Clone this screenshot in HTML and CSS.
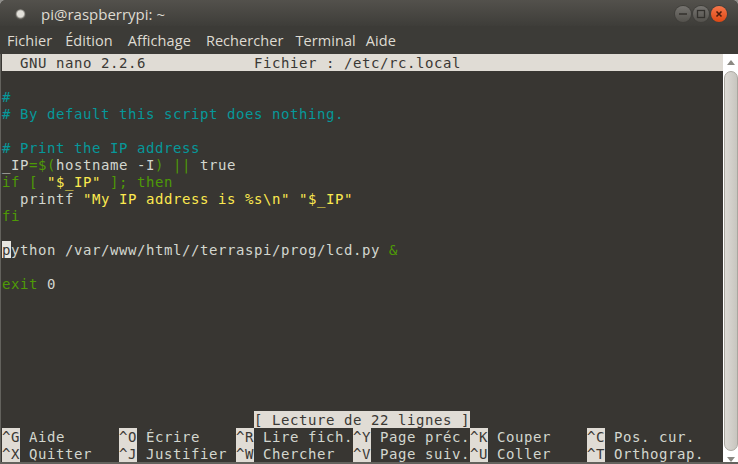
FILE: index.html
```html
<!DOCTYPE html>
<html lang="fr">
<head>
<meta charset="utf-8">
<title>pi@raspberrypi: ~</title>
<link rel="stylesheet" href="styles.css">
</head>
<body>
<div class="window">
  <header class="titlebar">
    <span class="app-dot"></span>
    <span class="title">pi@raspberrypi: ~</span>
    <div class="controls">
      <span class="btn"><svg viewBox="0 0 16 16"><path d="M4 8h8" class="glyph"/></svg></span>
      <span class="btn"><svg viewBox="0 0 16 16"><rect x="4.5" y="4.5" width="7" height="7" class="glyph"/></svg></span>
      <span class="btn close"><svg viewBox="0 0 16 16"><path d="M5.5 5.5l5 5M10.5 5.5l-5 5" class="glyph-x"/></svg></span>
    </div>
  </header>
  <nav class="menubar">
    <span>Fichier</span><span>Édition</span><span>Affichage</span><span>Rechercher</span><span>Terminal</span><span>Aide</span>
  </nav>
  <div class="main">
    <div class="terminal">
<div class="row rev">  GNU nano 2.2.6            Fichier : /etc/rc.local                             </div>
<div class="row"></div>
<div class="row c">#</div>
<div class="row c"># By default this script does nothing.</div>
<div class="row"></div>
<div class="row c"># Print the IP address</div>
<div class="row">_IP<span class="g">=$(</span>hostname -I<span class="g">) || </span>true</div>
<div class="row g">if [ <span class="y">"$_IP"</span> ]; then</div>
<div class="row">  printf <span class="y">"My IP address is %s\n" "$_IP"</span></div>
<div class="row g">fi</div>
<div class="row"></div>
<div class="row"><span class="cursor">p</span>ython /var/www/html//terraspi/prog/lcd.py <span class="g">&amp;</span></div>
<div class="row"></div>
<div class="row"><span class="g">exit</span> 0</div>
<div class="row"></div>
<div class="row"></div>
<div class="row"></div>
<div class="row"></div>
<div class="row"></div>
<div class="row"></div>
<div class="row"></div>
<div class="row">                            <span class="inv">[ Lecture de 22 lignes ]</span></div>
<div class="row"><span class="inv">^G</span> Aide      <span class="inv">^O</span> Écrire    <span class="inv">^R</span> Lire fich.<span class="inv">^Y</span> Page préc.<span class="inv">^K</span> Couper    <span class="inv">^C</span> Pos. cur.</div>
<div class="row"><span class="inv">^X</span> Quitter   <span class="inv">^J</span> Justifier <span class="inv">^W</span> Chercher  <span class="inv">^V</span> Page suiv.<span class="inv">^U</span> Coller    <span class="inv">^T</span> Orthograp.</div>
    </div>
    <aside class="scrollbar">
      <span class="arrow up"></span>
      <span class="thumb"></span>
      <span class="arrow down"></span>
    </aside>
  </div>
</div>
</body>
</html>
```
FILE: styles.css
```css
html, body { margin: 0; padding: 0; }
body { width: 738px; height: 464px; overflow: hidden; background: #8f8e8a; }
.window { width: 738px; height: 464px; display: flex; flex-direction: column; background: #3c3b37; font-family: "Open Sans", "Noto Sans", sans-serif; border-radius: 6px 6px 0 0; overflow: hidden; }
.titlebar { height: 26px; display: flex; align-items: center; padding: 2px 11px 0 15px; box-sizing: border-box; background: linear-gradient(#53514c, #3e3d39); flex: none; }
.app-dot { width: 11px; height: 11px; border-radius: 50%; background: radial-gradient(circle at 50% 45%, #e2e0da 0 38%, #55534e 62%, #33322e 100%); }
.title { margin-left: 15px; color: #dfdbd2; font-size: 15px; }
.controls { margin-left: auto; display: flex; gap: 2px; }
.btn { width: 16px; height: 16px; border-radius: 50%; background: linear-gradient(#767470, #53514c); box-shadow: 0 0 0 1px #403f3b; display: block; }
.btn svg { display: block; width: 16px; height: 16px; }
.glyph { fill: none; stroke: #33312d; stroke-width: 1.3; }
.glyph-x { fill: none; stroke: #4a1c0c; stroke-width: 1.6; }
.btn.close { background: linear-gradient(#f5764a, #dd4814); }
.menubar { height: 28px; display: flex; align-items: center; gap: 13px; padding: 0 0 0 7px; box-sizing: border-box; color: #dfdbd2; font-size: 14.5px; letter-spacing: 0.07px; flex: none; }
.menubar span:nth-child(3) { margin-left: 2px; }
.menubar span:nth-child(4) { margin-left: 2px; }
.menubar span:nth-child(5) { margin-left: -1px; }
.menubar span:nth-child(6) { margin-left: -3px; }
.main { display: flex; flex: none; height: 408px; box-sizing: content-box; padding-left: 1px; border-left: 1px solid #63625d; border-bottom: 2px solid #63625d; background: #383632; }
.terminal { width: 721px; flex: none; font-family: "DejaVu Sans Mono", monospace; font-size: 14px; letter-spacing: 0.57px; color: #d3d7cf; background: #383632; }
.row { height: 17px; line-height: 19px; white-space: pre; }
.rev { background: #e0dcd5; color: #3a3834; }
.c { color: #06989a; }
.g { color: #4e9a06; }
.y { color: #fce94f; }
.row .inv { background: #e0dcd5; color: #3a3834; display: inline-block; height: 17px; vertical-align: top; }
.cursor { background: #e8e6e0; color: #383632; display: inline-block; height: 17px; vertical-align: top; }
.scrollbar { width: 15px; height: 408px; background: #fff; display: flex; flex-direction: column; align-items: center; flex: none; }
.arrow { width: 0; height: 0; border-left: 4px solid transparent; border-right: 4px solid transparent; flex: none; }
.up { border-bottom: 5px solid #8a8882; margin: 6px 0 6px; }
.down { border-top: 5px solid #8a8882; margin: 6px 0 0; }
.thumb { flex: 1; width: 14px; border-radius: 7px; background: linear-gradient(90deg, #dcdad5, #c8c5bf); border: 1px solid #a9a69f; box-sizing: border-box; }
```
